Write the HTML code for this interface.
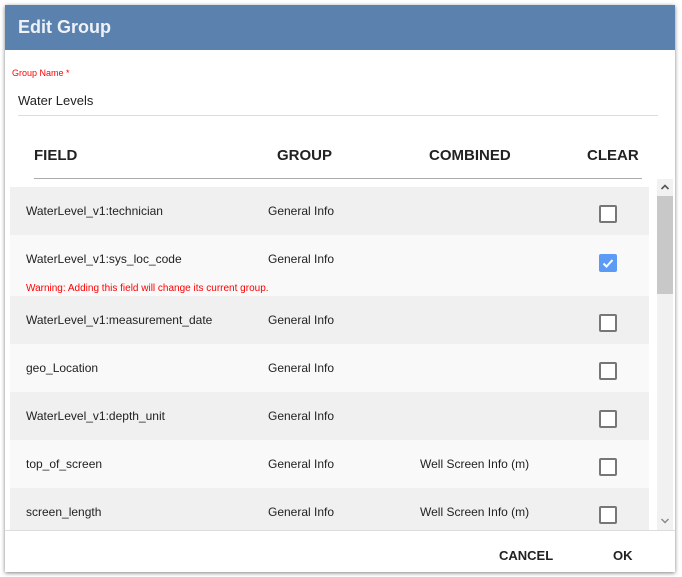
<html><head><style>
body{margin:0;width:682px;height:577px;background:#fff;font-family:"Liberation Sans",sans-serif;position:relative;overflow:hidden}
.dlg{position:absolute;left:5px;top:5px;width:670px;height:567px;background:#fff;box-shadow:0 1px 4px rgba(0,0,0,.5)}
.hd{height:45px;background:#5b82ae;color:#eef2f7;font-weight:bold;font-size:18px;line-height:45px;padding-left:13px}
.a{position:absolute;white-space:nowrap}
.row{position:absolute;left:5px;width:639px;font-size:12px;color:#222}
.row span{position:absolute;top:17px}
.cb{position:absolute;left:589px;top:18px;width:14px;height:14px;border:2px solid #777;border-radius:2px;background:#fff}
.th{position:absolute;top:142px;font-weight:bold;font-size:15px;color:#222}
</style></head><body>
<div class="dlg">
<div class="hd">Edit Group</div>
<div class="a" style="left:7px;top:63px;font-size:9px;color:#f00">Group Name *</div>
<div class="a" style="left:13px;top:88px;font-size:13px;color:#222">Water Levels</div>
<div class="a" style="left:13px;top:110px;width:640px;height:1px;background:#ddd"></div>
<div class="th" style="left:29px">FIELD</div>
<div class="th" style="left:272px">GROUP</div>
<div class="th" style="left:424px">COMBINED</div>
<div class="th" style="left:582px">CLEAR</div>
<div class="a" style="left:29px;top:173px;width:608px;height:1px;background:#aaa"></div>

<div class="row" style="top:182px;height:48px;background:#f0f0f0"><span style="left:16px">WaterLevel_v1:technician</span><span style="left:258px">General Info</span><div class="cb"></div></div>
<div class="row" style="top:230px;height:61px;background:#f9f9f9"><span style="left:16px">WaterLevel_v1:sys_loc_code</span><span style="left:258px">General Info</span><span style="left:16px;top:48px;font-size:10px;color:#f00">Warning: Adding this field will change its current group.</span><div class="cb" style="background:#5b9bf5;border-color:#5b9bf5;top:19px"><svg width="14" height="14" viewBox="0 0 14 14"><path d="M2.5 7.5l3 3 6-6.5" stroke="#fff" stroke-width="2" fill="none"/></svg></div></div>
<div class="row" style="top:291px;height:48px;background:#f0f0f0"><span style="left:16px">WaterLevel_v1:measurement_date</span><span style="left:258px">General Info</span><div class="cb"></div></div>
<div class="row" style="top:339px;height:48px;background:#f9f9f9"><span style="left:16px">geo_Location</span><span style="left:258px">General Info</span><div class="cb"></div></div>
<div class="row" style="top:387px;height:48px;background:#f0f0f0"><span style="left:16px">WaterLevel_v1:depth_unit</span><span style="left:258px">General Info</span><div class="cb"></div></div>
<div class="row" style="top:435px;height:48px;background:#f9f9f9"><span style="left:16px">top_of_screen</span><span style="left:258px">General Info</span><span style="left:410px">Well Screen Info (m)</span><div class="cb"></div></div>
<div class="row" style="top:483px;height:42px;background:#f0f0f0"><span style="left:16px">screen_length</span><span style="left:258px">General Info</span><span style="left:410px">Well Screen Info (m)</span><div class="cb"></div></div>

<div class="a" style="left:652px;top:174px;width:16px;height:351px;background:#f1f1f1"></div>
<div class="a" style="left:652px;top:191px;width:16px;height:98px;background:#c8c8c8"></div>
<svg class="a" style="left:652px;top:176px" width="16" height="12"><path d="M4.5 8l3.5-3.5 3.5 3.5" stroke="#555" stroke-width="1.6" fill="none"/></svg>
<svg class="a" style="left:652px;top:510px" width="16" height="12"><path d="M4.5 4l3.5 3.5 3.5-3.5" stroke="#888" stroke-width="1.4" fill="none"/></svg>
<div class="a" style="left:0;top:525px;width:670px;height:1px;background:#ddd"></div>
<div class="a" style="left:494px;top:543px;font-weight:bold;font-size:13px;color:#222">CANCEL</div>
<div class="a" style="left:608px;top:543px;font-weight:bold;font-size:13px;color:#222">OK</div>
</div>
</body></html>
